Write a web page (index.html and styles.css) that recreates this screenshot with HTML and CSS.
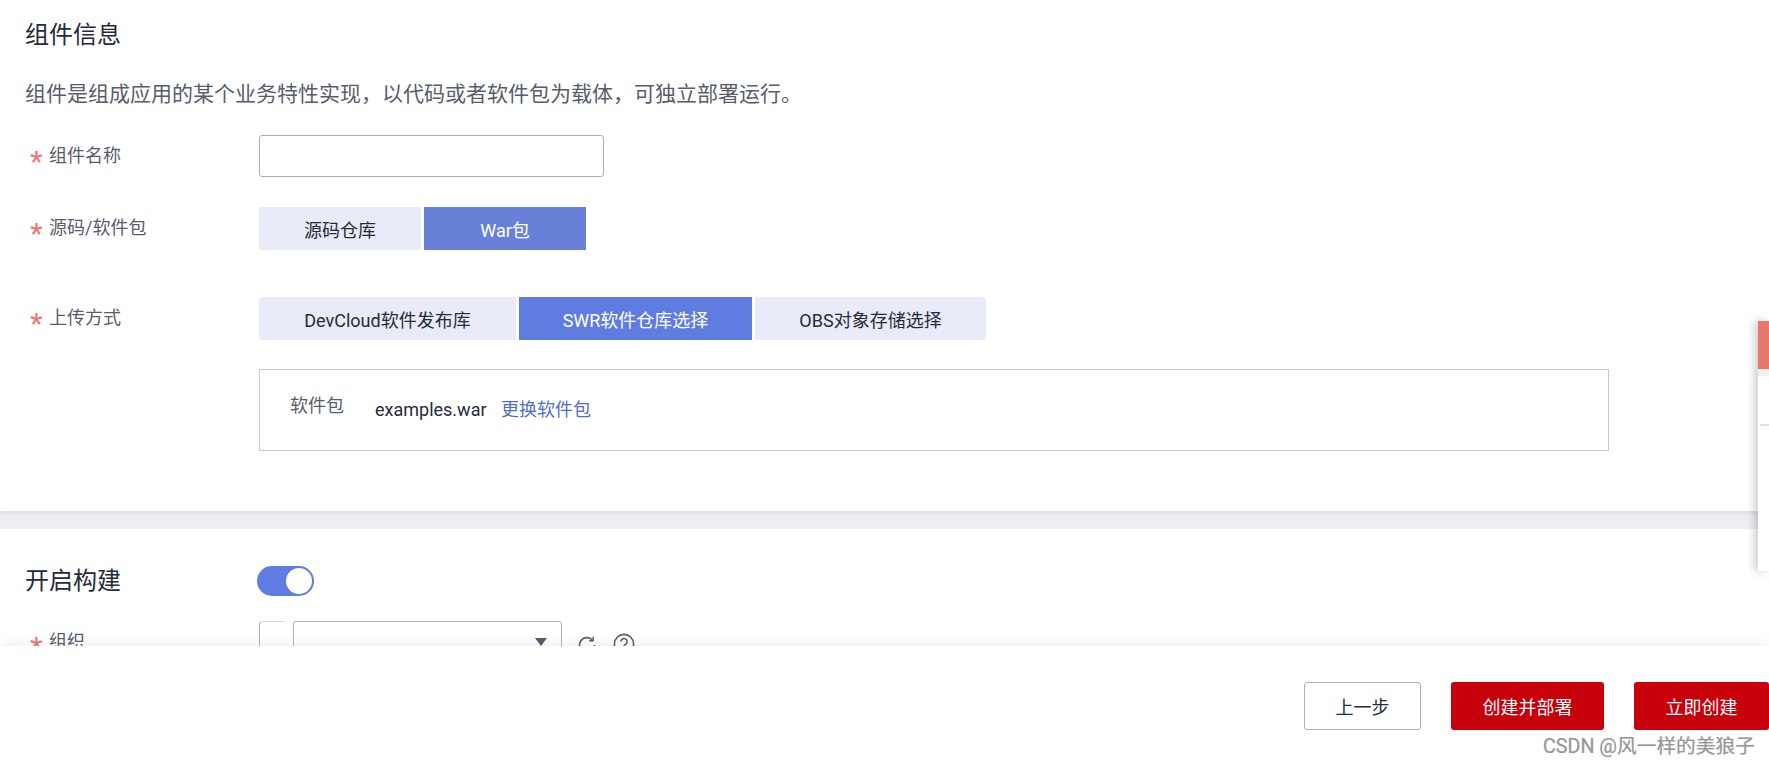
FILE: index.html
```html
<!DOCTYPE html>
<html lang="zh-CN">
<head>
    <meta charset="UTF-8">
    <meta name="viewport" content="width=device-width, initial-scale=1.0">
    <title>组件信息</title>
    <link rel="stylesheet" href="styles.css">
</head>
<body>
    <main class="content">
        <section class="section info">
            <h2>组件信息</h2>
            <p class="desc">组件是组成应用的某个业务特性实现，以代码或者软件包为载体，可独立部署运行。</p>

            <div class="row row-name">
                <label class="label"><span class="star">*</span>组件名称</label>
                <input type="text" class="text-input">
            </div>

            <div class="row row-source">
                <label class="label"><span class="star">*</span>源码/软件包</label>
                <div class="tabs">
                    <button class="tab tab-source">源码仓库</button>
                    <button class="tab tab-source active-soft">War包</button>
                </div>
            </div>

            <div class="row row-upload">
                <label class="label"><span class="star">*</span>上传方式</label>
                <div class="tabs rounded">
                    <button class="tab tab-dev">DevCloud软件发布库</button>
                    <button class="tab tab-swr active">SWR软件仓库选择</button>
                    <button class="tab tab-obs">OBS对象存储选择</button>
                </div>
            </div>

            <div class="package-box">
                <span class="package-label">软件包</span>
                <span class="package-name">examples.war</span>
                <a href="#" class="package-link">更换软件包</a>
            </div>
        </section>

        <section class="section build">
            <div class="build-head">
                <h2>开启构建</h2>
                <span class="switch"><span class="knob"></span></span>
            </div>
            <div class="row row-org">
                <label class="label"><span class="star">*</span>组织</label>
                <span class="org-prefix"></span>
                <div class="select"><span class="caret"></span></div>
                <svg class="icon icon-refresh" viewBox="0 0 20 20" width="20" height="20" fill="none" stroke="#575d6c" stroke-width="1.6">
                    <path d="M15.6 5.2A7.4 7.4 0 1 0 17.4 10"/>
                    <path d="M16.2 1.8v4h-4" stroke-width="1.4"/>
                </svg>
                <svg class="icon icon-help" viewBox="0 0 22 22" width="22" height="22" fill="none" stroke="#575d6c" stroke-width="1.6">
                    <circle cx="11" cy="11" r="9.6"/>
                    <path d="M7.9 8.6a3.1 3.1 0 1 1 4.8 2.6c-1.1.7-1.7 1.3-1.7 2.6"/>
                    <path d="M11 15.4v1.7"/>
                </svg>
            </div>
        </section>
    </main>

    <footer class="footer">
        <button class="btn btn-plain">上一步</button>
        <button class="btn btn-red btn-deploy">创建并部署</button>
        <button class="btn btn-red btn-create">立即创建</button>
    </footer>

    <aside class="side-panel">
        <div class="side-top"></div>
        <div class="side-strip"></div>
        <div class="side-line"></div>
    </aside>

    <div class="watermark">CSDN @风一样的美狼子</div>
</body>
</html>
```

FILE: styles.css
```css
* {
    margin: 0;
    padding: 0;
    box-sizing: border-box;
    font-family: Roboto, "Noto Sans CJK SC", sans-serif;
}

body {
    background: #ffffff;
    color: #252b3a;
    height: 765px;
    overflow: hidden;
    display: flex;
    flex-direction: column;
}

.content {
    height: 646px;
    overflow: hidden;
    background: #edeef3;
}

.section {
    background: #ffffff;
    padding-left: 25px;
}

.info {
    height: 511px;
    padding-top: 18px;
    box-shadow: 0 2px 5px rgba(0, 0, 0, 0.08);
}

h2 {
    font-size: 24px;
    font-weight: 400;
    line-height: 34px;
    color: #252b3a;
}

.desc {
    margin-top: 27px;
    font-size: 21px;
    line-height: 30px;
    color: #575d6c;
}

.row {
    display: flex;
    align-items: center;
}

.row-name {
    margin-top: 26px;
}

.row-name .label {
    top: 0;
}

.row-source {
    margin-top: 30px;
}

.row-upload {
    margin-top: 47px;
}

.label {
    width: 234px;
    flex-shrink: 0;
    display: flex;
    align-items: center;
    font-size: 18px;
    line-height: 26px;
    color: #575d6c;
    position: relative;
    top: -1px;
}

.star {
    width: 24px;
    padding-left: 5px;
    height: 26px;
    font-family: "Liberation Sans", sans-serif;
    font-size: 33px;
    line-height: 39px;
    color: #f66f6a;
}

.text-input {
    width: 345px;
    height: 42px;
    border: 1px solid #adb0b8;
    border-radius: 3px;
    background: #ffffff;
}

.tabs {
    display: flex;
    gap: 3px;
}

.tab {
    border: none;
    background: #e9ecf8;
    color: #252b3a;
    font-size: 18px;
}

.tab-source {
    width: 162px;
    height: 43px;
}

.active-soft {
    background: #6881d8;
    color: #ffffff;
}

.rounded .tab {
    height: 43px;
}

.tab-dev {
    width: 257px;
    border-radius: 3px 0 0 3px;
}

.tab-swr {
    width: 233px;
}

.tab-obs {
    width: 231px;
    border-radius: 0 3px 3px 0;
}

.tab.active {
    background: #5f7de0;
    color: #ffffff;
}

.package-box {
    margin: 29px 0 0 234px;
    width: 1350px;
    height: 82px;
    border: 1px solid #c8c8c8;
    padding: 23px 0 0 30px;
    display: flex;
    font-size: 18px;
    line-height: 26px;
}

.package-label {
    width: 85px;
    color: #575d6c;
}

.package-name {
    margin-top: 4px;
    width: 126px;
    color: #252b3a;
}

.package-link {
    margin-top: 4px;
    color: #526ecc;
    text-decoration: none;
}

.build {
    margin-top: 18px;
    height: 117px;
    padding-top: 35px;
}

.build-head {
    display: flex;
    align-items: center;
    height: 34px;
}

.build-head h2 {
    width: 232px;
}

.switch {
    width: 57px;
    height: 30px;
    border-radius: 15px;
    background: #5f7de0;
    display: flex;
    justify-content: flex-end;
    align-items: center;
    padding-right: 2px;
}

.knob {
    width: 26px;
    height: 26px;
    border-radius: 50%;
    background: #ffffff;
}

.row-org {
    margin-top: 23px;
    align-items: flex-start;
}

.row-org .label {
    margin-top: 9px;
}

.org-prefix {
    width: 26px;
    height: 42px;
    border: 1px solid #adb0b8;
    border-right: none;
    border-top-color: #d6d7db;
    border-radius: 3px 0 0 0;
}

.select {
    margin-left: 8px;
    width: 269px;
    height: 42px;
    border: 1px solid #adb0b8;
    border-radius: 3px;
    position: relative;
}

.caret {
    position: absolute;
    top: 16px;
    right: 14px;
    border-left: 6px solid transparent;
    border-right: 6px solid transparent;
    border-top: 8px solid #575d6c;
}

.icon {
    flex-shrink: 0;
}

.icon-refresh {
    margin: 14px 0 0 15px;
}

.icon-help {
    margin: 12px 0 0 16px;
}

.footer {
    flex: 1;
    display: flex;
    justify-content: flex-end;
    align-items: flex-start;
    gap: 30px;
    padding-top: 36px;
    background: #ffffff;
    position: relative;
    box-shadow: 0 -4px 8px rgba(0, 0, 0, 0.05);
}

.btn {
    height: 48px;
    font-size: 18px;
    border-radius: 3px;
}

.btn-plain {
    width: 117px;
    background: #ffffff;
    border: 1px solid #adb0b8;
    color: #252b3a;
}

.btn-red {
    background: #c7000b;
    border: none;
    color: #ffffff;
}

.btn-deploy {
    width: 153px;
}

.btn-create {
    width: 135px;
}

.side-panel {
    position: absolute;
    top: 321px;
    right: 0;
    width: 11px;
    height: 250px;
    background: #ffffff;
    box-shadow: -3px 0 10px rgba(0, 0, 0, 0.22);
}

.side-top {
    height: 48px;
    background: #e8786e;
}

.side-strip {
    height: 7px;
    background: #efefef;
}

.side-line {
    margin: 48px 0 0 2px;
    height: 2px;
    background: #e1e1ea;
}

.watermark {
    position: absolute;
    left: 1543px;
    top: 734px;
    font-size: 19.7px;
    line-height: 26px;
    color: #999999;
    text-shadow: 0 0 1px rgba(0, 0, 0, 0.25);
    white-space: nowrap;
}
```
